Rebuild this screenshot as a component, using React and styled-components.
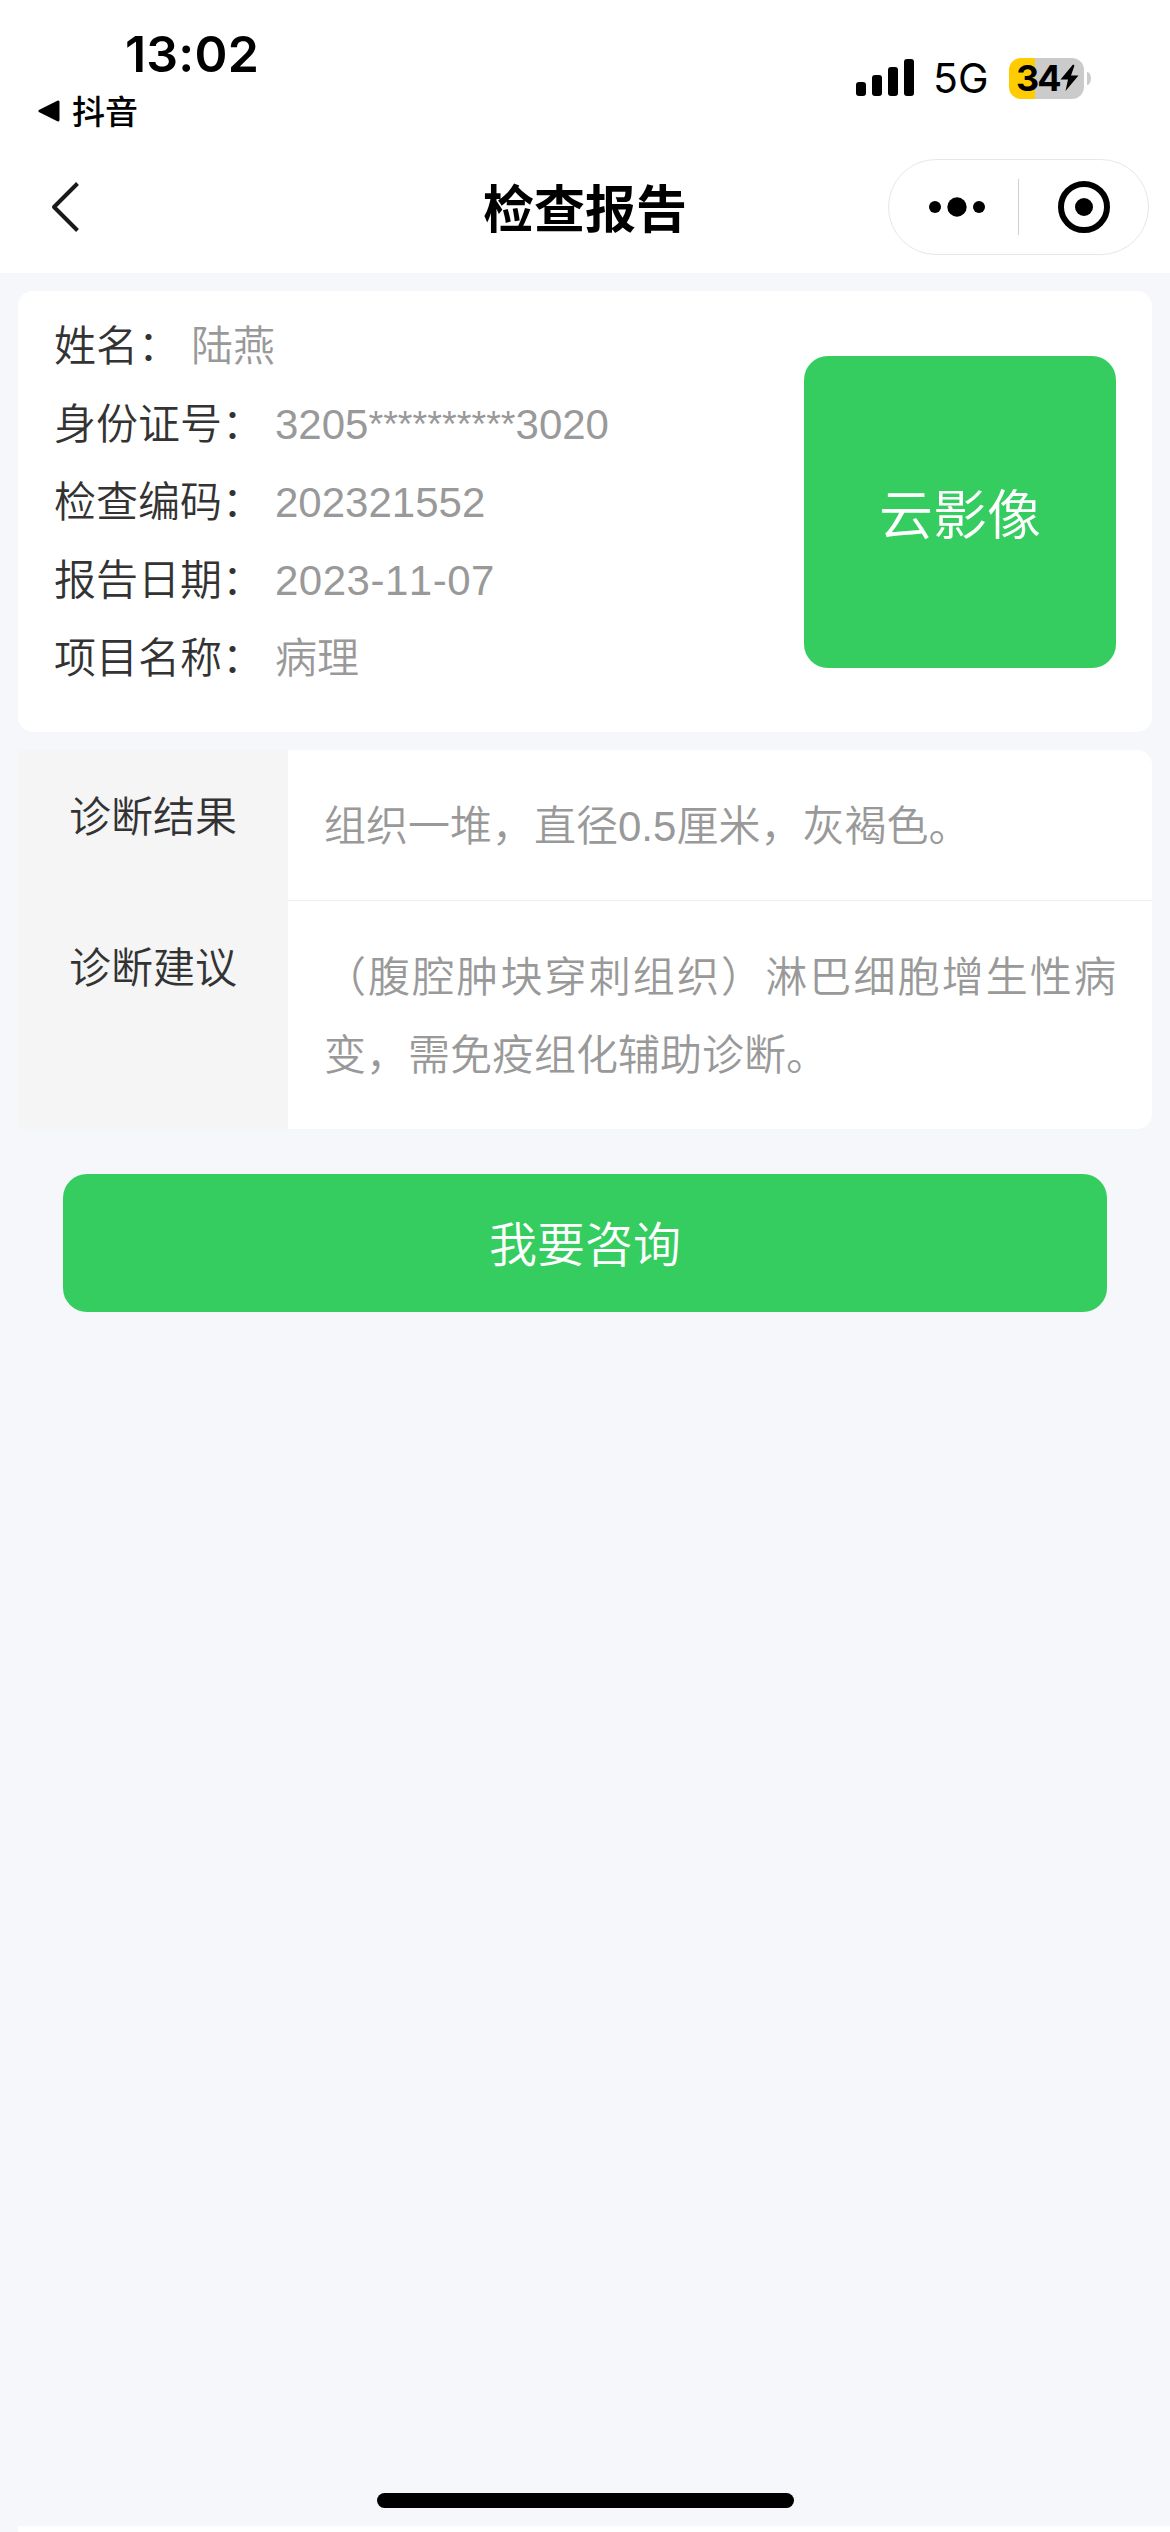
import React from "react";
import styled, { createGlobalStyle } from "styled-components";

const GlobalStyle = createGlobalStyle`
  * {
    box-sizing: border-box;
  }

  body {
    margin: 0;
    background-color: #f5f7fb;
    font-family: "Liberation Sans", "Noto Sans CJK SC", sans-serif;
    font-kerning: none;
    text-spacing-trim: space-all;
  }
`;

const Page = styled.div`
  width: 1170px;
  height: 2532px;
  display: flex;
  flex-direction: column;
  background-color: #f5f7fb;
  overflow: hidden;
`;

const StatusBar = styled.div`
  height: 141px;
  display: flex;
  justify-content: space-between;
  align-items: flex-start;
  padding: 24px 79px 0 38px;
  background-color: #fff;
  color: #000;
`;

const StatusLeft = styled.div`
  display: flex;
  flex-direction: column;
`;

const Time = styled.div`
  padding-left: 87px;
  font-family: "Inter", sans-serif;
  font-size: 50px;
  font-weight: 600;
  line-height: 60px;
  letter-spacing: 0.2px;
`;

const BackToApp = styled.div`
  display: flex;
  align-items: center;
  gap: 12px;
  height: 54px;
`;

const AppName = styled.span`
  padding-bottom: 3px;
  font-family: "Noto Sans CJK SC", sans-serif;
  font-size: 33px;
  font-weight: 500;
  line-height: 48px;
`;

const StatusRight = styled.div`
  display: flex;
  align-items: center;
  height: 108px;
`;

const Network = styled.span`
  width: 76px;
  margin-left: 19px;
  font-family: "Inter", sans-serif;
  font-size: 41px;
  line-height: 50px;
`;

const Battery = styled.div`
  width: 75px;
  height: 41px;
  display: flex;
  align-items: center;
  padding-left: 7px;
  border-radius: 12px;
  background: linear-gradient(to right, #ffcc00 26px, #cbcbcb 26px);
  font-family: "Inter", sans-serif;
  font-size: 36px;
  font-weight: 700;
  letter-spacing: -2px;
  line-height: 41px;

  svg {
    flex-shrink: 0;
  }
`;

const BatteryTip = styled.div`
  width: 4px;
  height: 13px;
  margin-left: 3px;
  border-radius: 0 4px 4px 0 / 0 7px 7px 0;
  background-color: #cbcbcb;
`;

const NavBar = styled.div`
  height: 132px;
  display: grid;
  grid-template-columns: 1fr auto 1fr;
  align-items: center;
  padding: 0 21px 0 50px;
  background-color: #fff;
`;

const Title = styled.h1`
  margin: 0;
  padding: 0 29px 2px 0;
  font-family: "Noto Sans CJK SC", sans-serif;
  font-size: 51px;
  font-weight: 700;
  line-height: 74px;
  color: #000;
`;

const Capsule = styled.div`
  justify-self: end;
  width: 261px;
  height: 96px;
  display: grid;
  grid-template-columns: 129px 1px 1fr;
  align-items: center;
  border: 1px solid #e7e7e7;
  border-radius: 48px;
`;

const CapsuleItem = styled.div`
  display: flex;
  justify-content: center;
  padding-left: ${(props) => props.$indent || 0}px;
`;

const CapsuleDivider = styled.div`
  height: 56px;
  background-color: #cfcfcf;
`;

const Content = styled.main`
  flex: 1;
  display: flex;
  flex-direction: column;
  padding: 18px 18px 0;
`;

const InfoCard = styled.section`
  height: 441px;
  display: flex;
  justify-content: space-between;
  align-items: flex-start;
  padding: 17px 36px 0;
  border-radius: 15px;
  background-color: #fff;
`;

const InfoRow = styled.div`
  display: flex;
  gap: 11px;
  height: 78px;
  font-size: 42px;
  font-weight: 350;
  line-height: 78px;
  color: #999;
`;

const Label = styled.span`
  color: #333;
`;

const Value = styled.span`
  letter-spacing: ${(props) => props.$spacing || 0}px;
`;

const Mask = styled.span`
  font-size: 37.8px;
  line-height: 1;
  vertical-align: 2px;
`;

const ImageButton = styled.button`
  width: 312px;
  height: 312px;
  margin-top: 48px;
  padding: 0 0 2px;
  border: none;
  border-radius: 24px;
  background-color: #35cd5f;
  font-family: inherit;
  font-size: 54px;
  font-weight: 350;
  color: #fff;
`;

const ResultTable = styled.section`
  margin-top: 18px;
  border-radius: 0 15px 15px 0;
  overflow: hidden;
  background-color: #fff;
`;

const ResultRow = styled.div`
  display: grid;
  grid-template-columns: 270px 1fr;
  font-size: 42px;
  font-weight: 350;
`;

const ResultLabel = styled.div`
  padding-top: 38px;
  background-color: #f5f5f5;
  color: #333;
  line-height: 60px;
  text-align: center;
`;

const ResultText = styled.div`
  padding: 38px 36px 34px;
  border-bottom: ${(props) => (props.$last ? "none" : "1px solid #eee")};
  color: #999;
  line-height: 78px;
  text-align: justify;
`;

const ConsultButton = styled.button`
  height: 138px;
  margin: 45px 45px 0;
  padding: 0 0 4px;
  border: none;
  border-radius: 24px;
  background-color: #35cd5f;
  font-family: inherit;
  font-size: 48px;
  font-weight: 350;
  color: #fff;
`;

const HomeIndicator = styled.div`
  width: 417px;
  height: 15px;
  margin: 0 auto 18px;
  border-radius: 8px;
  background-color: #000;
`;

const NextPanel = styled.div`
  height: 6px;
  margin-left: 18px;
  background-color: #fff;
`;

const info = [
  { label: "姓名：", value: "陆燕" },
  {
    label: "身份证号：",
    value: (
      <>
        3205<Mask>**********</Mask>3020
      </>
    ),
  },
  { label: "检查编码：", value: "202321552" },
  { label: "报告日期：", value: "2023-11-07", spacing: 0.5 },
  { label: "项目名称：", value: "病理" },
];

const results = [
  { label: "诊断结果", text: "组织一堆，直径0.5厘米，灰褐色。" },
  {
    label: "诊断建议",
    text: "（腹腔肿块穿刺组织）淋巴细胞增生性病变，需免疫组化辅助诊断。",
  },
];

const SignalIcon = () => (
  <svg width="58" height="38" viewBox="0 0 58 38">
    <rect x="0" y="23" width="10" height="14" rx="3" />
    <rect x="16" y="16" width="10" height="21" rx="3" />
    <rect x="32" y="8" width="10" height="29" rx="3" />
    <rect x="48" y="0" width="10" height="37" rx="3" />
  </svg>
);

const App = () => {
  return (
    <Page>
      <GlobalStyle />
      <StatusBar>
        <StatusLeft>
          <Time>13:02</Time>
          <BackToApp>
            <svg width="22" height="22" viewBox="0 0 22 22">
              <path
                d="M2 11L20 2V20Z"
                stroke="#000"
                strokeWidth="3"
                strokeLinejoin="round"
              />
            </svg>
            <AppName>抖音</AppName>
          </BackToApp>
        </StatusLeft>
        <StatusRight>
          <SignalIcon />
          <Network>5G</Network>
          <Battery>
            34
            <svg width="19" height="28" viewBox="0 0 19 28">
              <path d="M13 0.5L0.5 15.5H8L5.5 27L18.5 11.5H11L14.5 1.5Z" />
            </svg>
          </Battery>
          <BatteryTip />
        </StatusRight>
      </StatusBar>

      <NavBar>
        <svg width="30" height="52" viewBox="0 0 30 52" fill="none">
          <path
            d="M27.5 2.5L4 26L27.5 49.5"
            stroke="#1a1a1a"
            strokeWidth="4"
            strokeLinejoin="round"
          />
        </svg>
        <Title>检查报告</Title>
        <Capsule>
          <CapsuleItem $indent={7}>
            <svg width="58" height="22" viewBox="0 0 58 22">
              <circle cx="7" cy="11" r="6" />
              <circle cx="29" cy="11" r="9.7" />
              <circle cx="51" cy="11" r="6" />
            </svg>
          </CapsuleItem>
          <CapsuleDivider />
          <CapsuleItem>
            <svg width="52" height="52" viewBox="0 0 52 52">
              <circle
                cx="26"
                cy="26"
                r="23"
                fill="none"
                stroke="#000"
                strokeWidth="6"
              />
              <circle cx="26" cy="26" r="9" />
            </svg>
          </CapsuleItem>
        </Capsule>
      </NavBar>

      <Content>
        <InfoCard>
          <div>
            {info.map((item) => (
              <InfoRow key={item.label}>
                <Label>{item.label}</Label>
                <Value $spacing={item.spacing}>{item.value}</Value>
              </InfoRow>
            ))}
          </div>
          <ImageButton>云影像</ImageButton>
        </InfoCard>

        <ResultTable>
          {results.map((item, index) => (
            <ResultRow key={item.label}>
              <ResultLabel>{item.label}</ResultLabel>
              <ResultText $last={index === results.length - 1}>
                {item.text}
              </ResultText>
            </ResultRow>
          ))}
        </ResultTable>

        <ConsultButton>我要咨询</ConsultButton>
      </Content>

      <HomeIndicator />
      <NextPanel />
    </Page>
  );
};

export default App;
